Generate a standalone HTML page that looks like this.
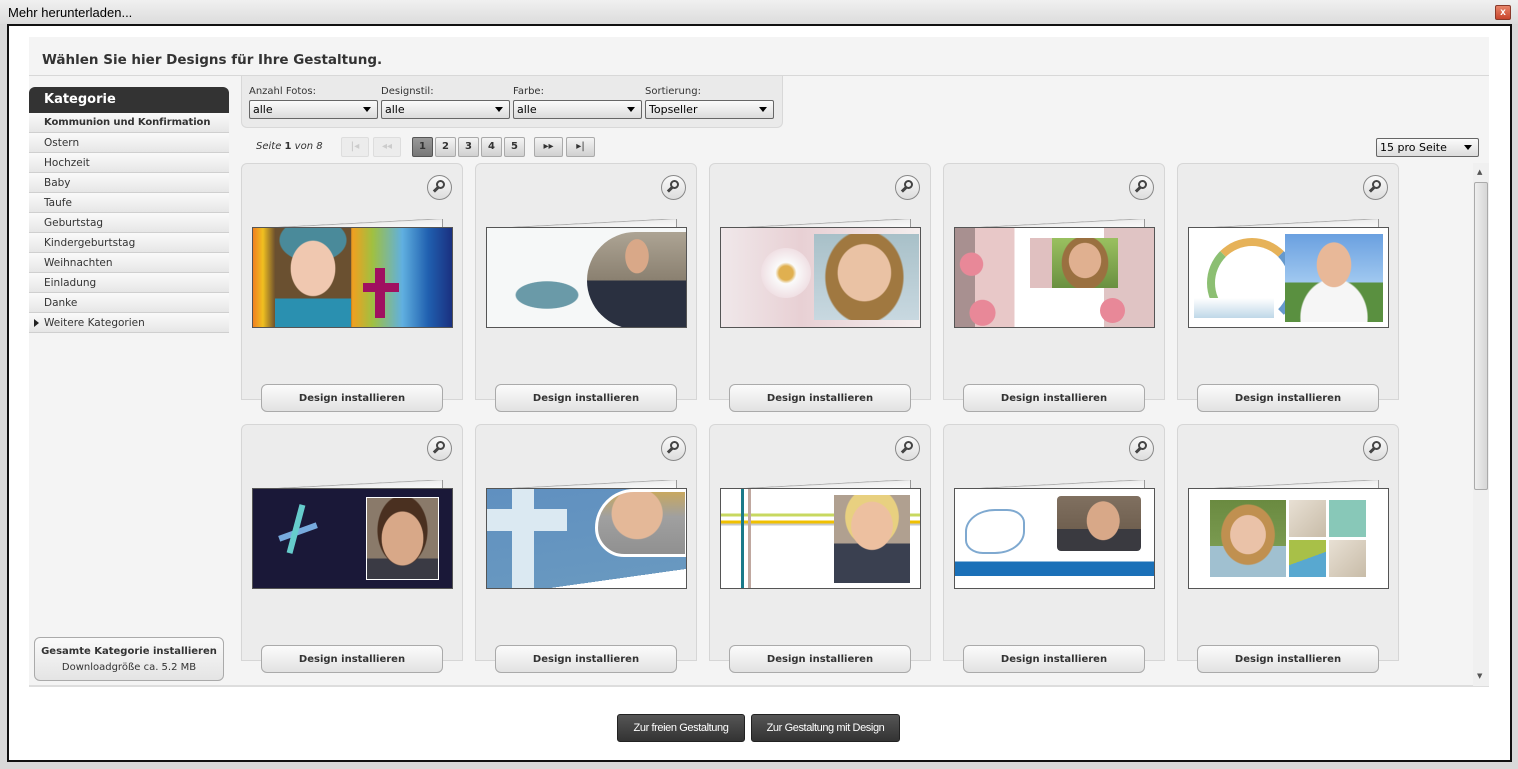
<!DOCTYPE html>
<html><head><meta charset="utf-8">
<style>
*{margin:0;padding:0;box-sizing:border-box}
body{width:1518px;height:769px;overflow:hidden;background:#d9d9d9;font-family:"DejaVu Sans","Liberation Sans",sans-serif;position:relative}
.abs{position:absolute}
#tb{left:0;top:0;width:1518px;height:24px;background:linear-gradient(#f0f0f0,#dcdcdc);font:13px "Liberation Sans",sans-serif;color:#000;padding:5px 8px}
#close{left:1495px;top:5px;width:16px;height:15px;background:linear-gradient(#e8866a,#c8452c);border:1px solid #8a3a2a;border-radius:2px;color:#fff;font:bold 10px "Liberation Sans";text-align:center;line-height:13px}
#frame{left:7px;top:24px;width:1505px;height:738px;background:#fff;border:2px solid #111}
#panel{left:29px;top:37px;width:1460px;height:650px;background:#f4f4f4;border-bottom:2px solid #ddd}
#title{left:42px;top:52px;font-weight:bold;font-size:13.5px;color:#333;white-space:nowrap}
#hr{left:29px;top:75px;width:1460px;height:1px;background:#d8d8d8}
#kat{left:29px;top:87px;width:200px;height:26px;background:#333;border-radius:6px 6px 0 0;color:#fff;font-weight:bold;font-size:13px;padding:5px 15px}
.it{position:absolute;left:29px;width:200px;height:20px;background:linear-gradient(#fafafa,#e6e6e6);border-bottom:1px solid #cfcfcf;font-size:10.5px;color:#333;padding:4px 15px;white-space:nowrap}
#filt{left:241px;top:76px;width:542px;height:52px;background:#eaeaea;border:1px solid #d8d8d8;border-top:none;border-radius:0 0 6px 6px}
.lb{position:absolute;top:86px;font-size:10px;color:#333}
.sel{position:absolute;height:19px;border:1px solid #666;border-radius:2px;background:linear-gradient(#fbfbfb,#dcdcdc);font-size:11px;color:#000;padding:2px 3px}
.sel:after{content:"";position:absolute;right:6px;top:6px;border:4px solid transparent;border-top:5px solid #000}
.pb{position:absolute;top:137px;height:20px;border:1px solid #aaa;border-radius:2px;background:linear-gradient(#f4f4f4,#d0d0d0);font-size:10px;font-weight:bold;color:#333;text-align:center;line-height:18px}
.pb.d{border-color:#ddd;background:#ececec;color:#ccc}
.card{position:absolute;width:222px;height:237px;background:#ececec;border:1px solid #d6d6d6;border-radius:6px 6px 0 0}
.mag{position:absolute;left:185px;top:11px;width:25px;height:25px;border:1px solid #888;border-radius:50%;background:linear-gradient(#fafafa,#ddd)}
.mag:before{content:"";position:absolute;left:8px;top:4px;width:9px;height:9px;border:2.5px solid #444;border-radius:50%;box-sizing:border-box}
.mag:after{content:"";position:absolute;left:5px;top:12px;width:6px;height:3px;background:#444;transform:rotate(-45deg)}
.fold{position:absolute;left:10px;top:55px;width:191px;height:9px;background:linear-gradient(177deg,transparent 48%,#999 50%,#eee 55%,#fafafa);border-right:1px solid #999}
.img{position:absolute;left:10px;top:63px;width:201px;height:101px;border:1px solid #555;overflow:hidden;background:#fff}
.img div{position:absolute}
.btn{position:absolute;left:19px;top:220px;width:182px;height:28px;border:1px solid #aaa;border-radius:6px;background:linear-gradient(#fbfbfb,#e2e2e2);font-size:10px;font-weight:bold;color:#333;text-align:center;line-height:27px}
.ph{background:radial-gradient(ellipse 28% 34% at 50% 45%,#e9bfa0 96%,transparent 100%),radial-gradient(ellipse 40% 45% at 50% 40%,#8a6a40 96%,transparent 100%),linear-gradient(#9aa 0,#9aa 65%,#345 65%)}
.bb{position:absolute;top:714px;height:28px;background:linear-gradient(#555,#333);border:1px solid #222;border-radius:3px;color:#fff;font:11px "Liberation Sans",sans-serif;letter-spacing:-0.4px;text-align:center;line-height:26px}
</style></head><body>
<div id="tb" class="abs">Mehr herunterladen...</div>
<div id="close" class="abs">x</div>
<div id="frame" class="abs"></div>
<div id="panel" class="abs"></div>
<div id="title" class="abs">Wählen Sie hier Designs für Ihre Gestaltung.</div>
<div id="hr" class="abs"></div>
<div id="kat" class="abs">Kategorie</div>
<div class="it" style="top:113px;font-weight:bold;font-size:10px;letter-spacing:-0.1px">Kommunion und Konfirmation</div>
<div class="it" style="top:133px">Ostern</div>
<div class="it" style="top:153px">Hochzeit</div>
<div class="it" style="top:173px">Baby</div>
<div class="it" style="top:193px">Taufe</div>
<div class="it" style="top:213px">Geburtstag</div>
<div class="it" style="top:233px">Kindergeburtstag</div>
<div class="it" style="top:253px">Weihnachten</div>
<div class="it" style="top:273px">Einladung</div>
<div class="it" style="top:293px">Danke</div>
<div class="it" style="top:313px">Weitere Kategorien<span style="position:absolute;left:5px;top:6px;border:4px solid transparent;border-left:5px solid #222"></span></div>
<div class="abs" style="left:34px;top:637px;width:190px;height:44px;border:1px solid #aaa;border-radius:6px;background:linear-gradient(#fafafa,#e4e4e4);font-size:10px;color:#333;text-align:center;padding-top:6px;line-height:16px;white-space:nowrap"><b>Gesamte Kategorie installieren</b><br>Downloadgröße ca. 5.2 MB</div>

<div id="filt" class="abs"></div>
<div class="lb" style="left:249px">Anzahl Fotos:</div>
<div class="lb" style="left:381px">Designstil:</div>
<div class="lb" style="left:513px">Farbe:</div>
<div class="lb" style="left:645px">Sortierung:</div>
<div class="sel" style="left:249px;top:100px;width:129px">alle</div>
<div class="sel" style="left:381px;top:100px;width:129px">alle</div>
<div class="sel" style="left:513px;top:100px;width:129px">alle</div>
<div class="sel" style="left:645px;top:100px;width:129px">Topseller</div>
<div class="sel" style="left:1376px;top:138px;width:103px;font-size:11px">15 pro Seite</div>

<div class="abs" style="left:256px;top:141px;font-size:10px;color:#333;font-style:italic">Seite <b style="font-style:normal">1</b> von 8</div>
<div class="pb d" style="left:341px;width:28px">|◂</div>
<div class="pb d" style="left:373px;width:28px">◂◂</div>
<div class="pb" style="left:412px;width:21px;background:linear-gradient(#999,#777);border-color:#555">1</div>
<div class="pb" style="left:435px;width:21px">2</div>
<div class="pb" style="left:458px;width:21px">3</div>
<div class="pb" style="left:481px;width:21px">4</div>
<div class="pb" style="left:504px;width:21px">5</div>
<div class="pb" style="left:534px;width:29px;font-weight:normal">▸▸</div>
<div class="pb" style="left:566px;width:29px;font-weight:normal">▸|</div>

<div class="abs" style="left:1473px;top:163px;width:16px;height:523px;background:#f0f0f0"></div>
<div class="abs" style="left:1474px;top:182px;width:14px;height:308px;background:linear-gradient(90deg,#eee,#d6d6d6);border:1px solid #aaa;border-radius:2px"></div>
<div class="abs" style="left:1477px;top:168px;font-size:7px;color:#555">▲</div>
<div class="abs" style="left:1477px;top:672px;font-size:7px;color:#555">▼</div>

<div class="card" style="left:241px;top:163px"><div class="mag"></div><div class="fold"></div>
<div class="img" style="background:linear-gradient(90deg,#f08020,#f0c020 5%,#5a4030 12%,#5a4030 48%,#f0a020 50%,#a0c040 60%,#60b0e0 75%,#2060b0 88%,#1a3080)">
<div class="ph" style="left:22px;top:0;width:76px;height:101px;background:radial-gradient(ellipse 30% 28% at 50% 40%,#f0c8b0 96%,transparent 100%),radial-gradient(ellipse 45% 22% at 50% 12%,#4a8a9a 96%,transparent 100%),linear-gradient(#6a5030 0,#6a5030 70%,#2a90b0 70%)"></div>
<div style="left:122px;top:40px;width:10px;height:50px;background:#a01060"></div><div style="left:110px;top:55px;width:36px;height:9px;background:#a01060"></div></div>
<div class="btn">Design installieren</div></div>

<div class="card" style="left:475px;top:163px"><div class="mag"></div><div class="fold"></div>
<div class="img" style="background:#f6f8f8"><div style="left:20px;top:25px;width:80px;height:70px;background:radial-gradient(ellipse 40% 20% at 50% 60%,#6a9aa8 96%,transparent 100%)"></div>
<div class="ph" style="left:100px;top:4px;width:100px;height:97px;border-radius:50px 0 0 50px;background:radial-gradient(ellipse 12% 18% at 50% 25%,#d9a888 96%,transparent 100%),linear-gradient(#ada494 0,#8a8070 50%,#2a3040 50%)"></div></div>
<div class="btn">Design installieren</div></div>

<div class="card" style="left:709px;top:163px"><div class="mag"></div><div class="fold"></div>
<div class="img" style="background:linear-gradient(90deg,#f0e8ea,#e8d0d4 40%,#f4eeee)"><div style="left:40px;top:20px;width:50px;height:50px;border-radius:50%;background:radial-gradient(#e0b050 20%,#fafafa 30%,#f0e0e4 70%)"></div>
<div class="ph" style="left:93px;top:6px;width:105px;height:86px;background:radial-gradient(ellipse 26% 34% at 48% 45%,#eac2a4 96%,transparent 100%),radial-gradient(ellipse 38% 55% at 48% 50%,#a07840 96%,transparent 100%),linear-gradient(#a8c0c8,#c8d8e0)"></div></div>
<div class="btn">Design installieren</div></div>

<div class="card" style="left:943px;top:163px"><div class="mag"></div><div class="fold"></div>
<div class="img" style="background:linear-gradient(90deg,#a89090 0,#a89090 10%,#e8c8c8 10%,#e8c8c8 30%,#fff 30%,#fff 75%,#e0c4c4 75%)"><div style="left:0;top:20px;width:55px;height:81px;background:radial-gradient(circle at 30% 20%,#e88898 15%,transparent 16%),radial-gradient(circle at 50% 80%,#e88898 18%,transparent 19%)"></div>
<div style="left:75px;top:10px;width:22px;height:50px;background:#e0c0c0"></div>
<div class="ph" style="left:97px;top:10px;width:66px;height:50px;background:radial-gradient(ellipse 25% 36% at 50% 45%,#e0b090 96%,transparent 100%),radial-gradient(ellipse 36% 55% at 50% 50%,#9a7040 96%,transparent 100%),linear-gradient(#9ac060,#6a9040)"></div>
<div style="left:145px;top:70px;width:25px;height:25px;border-radius:50%;background:#e88898"></div></div>
<div class="btn">Design installieren</div></div>

<div class="card" style="left:1177px;top:163px"><div class="mag"></div><div class="fold"></div>
<div class="img" style="background:#fff"><div style="left:18px;top:10px;width:90px;height:90px;border-radius:50%;border:8px solid transparent;border-top-color:#e0a030;border-left-color:#70b050;border-right-color:#4080c0;opacity:.8"></div>
<div style="left:5px;top:70px;width:80px;height:20px;background:linear-gradient(#fff,#bfd8e8)"></div>
<div class="ph" style="left:96px;top:6px;width:98px;height:88px;background:radial-gradient(ellipse 18% 26% at 50% 35%,#e8b898 96%,transparent 100%),radial-gradient(ellipse 35% 45% at 50% 95%,#f6f6f6 96%,transparent 100%),linear-gradient(#6aa0e0 0,#a0c8f0 55%,#5a9040 55%)"></div></div>
<div class="btn">Design installieren</div></div>

<div class="card" style="left:241px;top:424px"><div class="mag"></div><div class="fold"></div>
<div class="img" style="background:#1a1838"><div style="left:25px;top:40px;width:40px;height:6px;background:#7ad;transform:rotate(-20deg)"></div><div style="left:40px;top:15px;width:6px;height:50px;background:#6cc;transform:rotate(15deg)"></div>
<div class="ph" style="left:113px;top:8px;width:73px;height:83px;border:1px solid #fff;background:radial-gradient(ellipse 30% 34% at 50% 50%,#d8a888 96%,transparent 100%),radial-gradient(ellipse 36% 44% at 50% 40%,#4a3020 96%,transparent 100%),linear-gradient(#8a7a6a 0,#8a7a6a 75%,#3a3a44 75%)"></div></div>
<div class="btn">Design installieren</div></div>

<div class="card" style="left:475px;top:424px"><div class="mag"></div><div class="fold"></div>
<div class="img" style="background:linear-gradient(172deg,#6090c0 0,#6898c0 85%,#fff 85%)"><div style="left:25px;top:0;width:22px;height:101px;background:#dbe9f2"></div><div style="left:0;top:20px;width:80px;height:22px;background:#dbe9f2"></div>
<div class="ph" style="left:108px;top:0;width:93px;height:68px;border-radius:40px 0 0 30px;border:3px solid #fff;background:radial-gradient(ellipse 30% 42% at 45% 35%,#e4b898 96%,transparent 100%),linear-gradient(#c8a860 0,#a0a0a0 40%,#909090)"></div></div>
<div class="btn">Design installieren</div></div>

<div class="card" style="left:709px;top:424px"><div class="mag"></div><div class="fold"></div>
<div class="img" style="background:linear-gradient(#fff 0,#fff 25%,#c8d860 25%,#c8d860 28%,#fff 28%,#fff 32%,#f0c000 32%,#f0c000 35%,#c8c8c8 35%,#c8c8c8 37%,#fff 37%)"><div style="left:20px;top:0;width:3px;height:101px;background:#1a7a8a"></div><div style="left:27px;top:0;width:3px;height:101px;background:#c0a8a0"></div>
<div class="ph" style="left:113px;top:6px;width:76px;height:88px;background:radial-gradient(ellipse 28% 28% at 50% 35%,#edc0a0 96%,transparent 100%),radial-gradient(ellipse 36% 34% at 50% 25%,#e8d080 96%,transparent 100%),linear-gradient(#b0a090 0,#b0a090 55%,#3a4050 55%)"></div></div>
<div class="btn">Design installieren</div></div>

<div class="card" style="left:943px;top:424px"><div class="mag"></div><div class="fold"></div>
<div class="img" style="background:linear-gradient(#fff 0,#fff 73%,#1a70b8 73%,#1a70b8 88%,#fff 88%)"><div style="left:10px;top:20px;width:60px;height:45px;border:2px solid #2a70b0;border-radius:50% 30%;opacity:.6"></div>
<div class="ph" style="left:102px;top:7px;width:84px;height:55px;border-radius:4px;background:radial-gradient(ellipse 20% 36% at 55% 45%,#d8a888 96%,transparent 100%),linear-gradient(#807060 0,#706050 60%,#3a3a40 60%)"></div></div>
<div class="btn">Design installieren</div></div>

<div class="card" style="left:1177px;top:424px"><div class="mag"></div><div class="fold"></div>
<div class="img" style="background:#fff"><div class="ph" style="left:21px;top:11px;width:76px;height:77px;background:radial-gradient(ellipse 24% 26% at 50% 45%,#eac2a8 96%,transparent 100%),radial-gradient(ellipse 36% 40% at 50% 45%,#c09050 96%,transparent 100%),linear-gradient(#6a8a40 0,#7a9a50 60%,#a0c0d0 60%)"></div>
<div style="left:100px;top:11px;width:37px;height:37px;background:linear-gradient(135deg,#e8e0d4,#c8bca8)"></div>
<div style="left:140px;top:11px;width:37px;height:37px;background:#88c8b8"></div>
<div style="left:100px;top:51px;width:37px;height:37px;background:linear-gradient(160deg,#a8c048 50%,#58a8d0 50%)"></div>
<div style="left:140px;top:51px;width:37px;height:37px;background:linear-gradient(135deg,#e8e0d4,#c8bca8)"></div></div>
<div class="btn">Design installieren</div></div>

<div class="bb" style="left:617px;width:128px">Zur freien Gestaltung</div>
<div class="bb" style="left:751px;width:149px">Zur Gestaltung mit Design</div>
</body></html>
